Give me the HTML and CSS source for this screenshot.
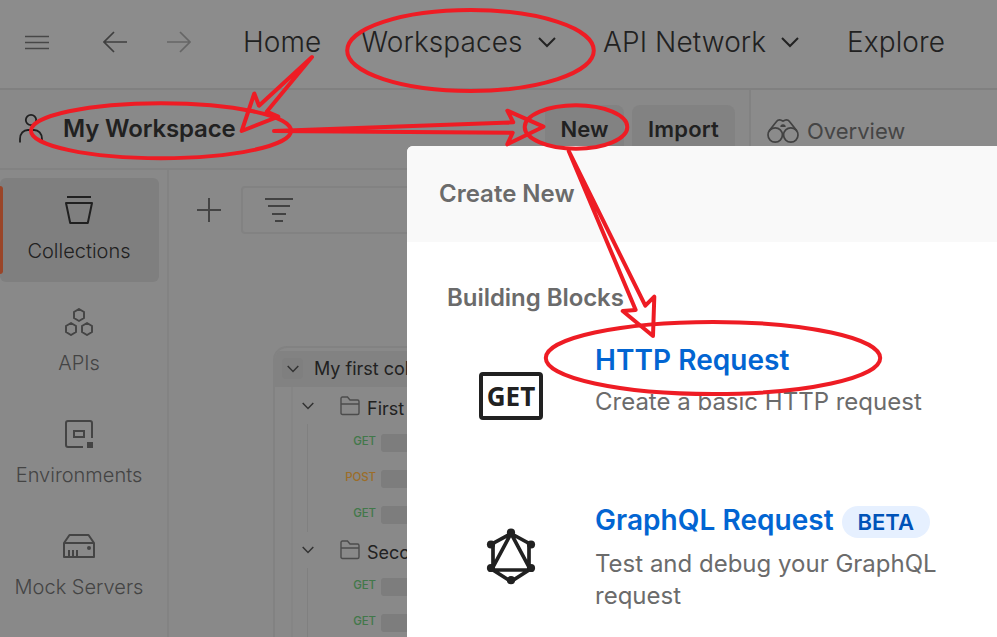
FILE: index.html
```html
<!DOCTYPE html>
<html lang="en">
<head>
<meta charset="utf-8">
<title>My Workspace</title>
<link rel="stylesheet" href="styles.css">
</head>
<body>
<div class="app">
  <header class="topnav">
    <div class="nav-controls">
      <svg class="icon-24" viewBox="0 0 24 24"><path d="M0 6.500h24M0 12.500h24M0 18.500h24" stroke="#474747" stroke-width="1.300"/></svg>
      <svg class="icon-24 back" viewBox="0 0 24 24"><path d="M24 12H1.500M11 2L1 12l10 10" stroke="#3f3f3f" stroke-width="1.700"/></svg>
      <svg class="icon-24 forward" viewBox="0 0 24 24"><path d="M0 12h22.500M13 2l10 10-10 10" stroke="#666" stroke-width="1.700"/></svg>
    </div>
    <a class="nav-link">Home</a>
    <a class="nav-link">Workspaces <svg class="chev" viewBox="0 0 18 12"><path d="M1 2l8 8 8-8" stroke="#222" stroke-width="2"/></svg></a>
    <a class="nav-link">API Network <svg class="chev" viewBox="0 0 18 12"><path d="M1 2l8 8 8-8" stroke="#222" stroke-width="2"/></svg></a>
    <a class="nav-link">Explore</a>
  </header>

  <div class="subbar">
    <div class="workspace">
      <svg class="user" viewBox="0 0 26 30"><circle cx="13" cy="7" r="5.200" stroke="#202020" stroke-width="1.800"/><path d="M2 29.500V26c0-5.500 3.500-9 8-9h6c4.500 0 8 3.500 8 9v3.500" stroke="#202020" stroke-width="1.800"/></svg>
      <span class="workspace-name">My Workspace</span>
      <button class="btn btn-new">New</button>
      <button class="btn btn-import">Import</button>
    </div>
    <div class="tab">
      <svg class="binoculars" viewBox="0 0 32 26"><g stroke="#424242" stroke-width="1.700"><circle cx="8.200" cy="17" r="7.200"/><circle cx="23.800" cy="17" r="7.200"/><path d="M2 13L9.500 3.500Q11 1.500 13.500 2l2.500 1 2.500-1q2.500-.5 4 1.500L30 13"/></g><path d="M13.300 9a2.700 2.700 0 0 1 5.400 0z" fill="#424242"/></svg>
      <span>Overview</span>
    </div>
  </div>

  <div class="body">
    <nav class="sidebar">
      <div class="side-item active">
        <svg class="side-icon" viewBox="0 0 32 28"><path d="M4 1h24M3 7h26l-4.200 20H7.200z" stroke="#202020" stroke-width="2" stroke-linejoin="round"/></svg>
        <span>Collections</span>
      </div>
      <div class="side-item">
        <svg class="side-icon" viewBox="0 0 32 28"><path d="M16 1l5 3v6l-5 3-5-3V4zM8 15l5 3v6l-5 3-5-3v-6zM24 15l5 3v6l-5 3-5-3v-6z" stroke="#444" stroke-width="1.900"/></svg>
        <span>APIs</span>
      </div>
      <div class="side-item">
        <svg class="side-icon" viewBox="0 0 32 28"><path d="M20 27H5q-2 0-2-2V3q0-2 2-2h22q2 0 2 2v15M11 11h10v6H11z" stroke="#444" stroke-width="2"/><path d="M24 22h6v6h-6z" fill="#444"/></svg>
        <span>Environments</span>
      </div>
      <div class="side-item">
        <svg class="side-icon" viewBox="0 0 32 28"><path d="M1 11h30v14H1zM1 11L6.500 3h19L31 11M6 18v7M10 18v7M14 18v7" stroke="#444" stroke-width="2" stroke-linejoin="round"/><circle cx="26" cy="16" r="2" fill="#444"/></svg>
        <span>Mock Servers</span>
      </div>
    </nav>

    <main class="panel">
      <div class="toolbar">
        <svg class="icon-24" viewBox="0 0 24 24"><path d="M0 12h24M12 0v24" stroke="#444" stroke-width="2"/></svg>
        <div class="filter"><svg viewBox="0 0 28 24"><path d="M0 1h28M3 8h22M7 16h14M10 23h8" stroke="#424242" stroke-width="2"/></svg></div>
      </div>
      <section class="card">
        <div class="card-head"><span class="toggle"><svg class="chev-sm" viewBox="0 0 12 8"><path d="M.7 1L6 6.500 11.300 1" stroke="#333" stroke-width="1.500"/></svg></span>My first collection</div>
        <div class="tree">
          <div class="folder-row first"><svg class="chev-sm" viewBox="0 0 12 8"><path d="M.7 1L6 6.500 11.300 1" stroke="#333" stroke-width="1.500"/></svg><svg class="folder" viewBox="0 0 20 20"><path d="M1 17V2.500Q1 1 2.500 1h5l2.500 3h7.500Q19 4 19 5.500V17q0 1.500-1.500 1.500h-15Q1 18.500 1 17zM1 8h18" stroke="#4c4c4c" stroke-width="1.400"/></svg><span>First folder</span></div>
          <div class="requests">
            <div class="req"><b class="get">GET</b><i></i></div>
            <div class="req"><b class="post">POST</b><i></i></div>
            <div class="req"><b class="get">GET</b><i></i></div>
          </div>
          <div class="folder-row"><svg class="chev-sm" viewBox="0 0 12 8"><path d="M.7 1L6 6.500 11.300 1" stroke="#333" stroke-width="1.500"/></svg><svg class="folder" viewBox="0 0 20 20"><path d="M1 17V2.500Q1 1 2.500 1h5l2.500 3h7.500Q19 4 19 5.500V17q0 1.500-1.500 1.500h-15Q1 18.500 1 17zM1 8h18" stroke="#4c4c4c" stroke-width="1.400"/></svg><span>Second folder</span></div>
          <div class="requests">
            <div class="req"><b class="get">GET</b><i></i></div>
            <div class="req"><b class="get">GET</b><i></i></div>
          </div>
        </div>
      </section>
    </main>
  </div>
</div>

<div class="modal">
  <div class="modal-head">Create New</div>
  <div class="modal-body">
    <h2>Building Blocks</h2>
    <div class="block">
      <div class="get-icon">GET</div>
      <div class="block-text">
        <div class="block-title">HTTP Request</div>
        <p>Create a basic HTTP request</p>
      </div>
    </div>
    <div class="block graphql">
      <svg class="gql-icon" viewBox="0 0 64 64"><path d="M32 9.500L52 20.500 50 22v24L32 57.500 14 46V22l-2-1.500zM32 9.500L12.500 46h39z" stroke="#212121" stroke-width="3.700"/><g fill="#212121"><circle cx="32" cy="8.500" r="4.100"/><circle cx="12" cy="20.500" r="4.100"/><circle cx="52" cy="20.500" r="4.100"/><circle cx="12" cy="44" r="4.100"/><circle cx="52" cy="44" r="4.100"/><circle cx="32" cy="56.200" r="4.100"/></g></svg>
      <div class="block-text">
        <div class="block-title">GraphQL Request<span class="badge">BETA</span></div>
        <p>Test and debug your GraphQL request</p>
      </div>
    </div>
  </div>
</div>

<svg class="annotations" viewBox="0 0 997 637">
  <ellipse cx="470.500" cy="50.500" rx="123.300" ry="40.500"/>
  <ellipse cx="161" cy="130.700" rx="130" ry="27.500"/>
  <ellipse cx="576" cy="127" rx="51.300" ry="21.700"/>
  <ellipse cx="713" cy="358" rx="167.200" ry="36"/>
  <path d="M312 57L259 105.700 254.300 93.500 241.700 131 278.300 116.700 266.700 111.700z"/>
  <path d="M274 131L513.300 122.300 507.300 110.700 543.500 126.700 507.300 144.300 512.700 132.700z"/>
  <path d="M568.700 151L645.300 305.700 654.300 296.700 653 336 622.700 311 635.700 310z"/>
</svg>
</body>
</html>
```
FILE: styles.css
```css
* { box-sizing: border-box; }
body {
  margin: 0;
  width: 997px;
  height: 637px;
  overflow: hidden;
  position: relative;
  font-family: Inter, "Liberation Sans", sans-serif;
  background: #898989;
  color: #212121;
}
svg { fill: none; flex: none; display: block; }
.app { height: 637px; display: flex; flex-direction: column; overflow: hidden; }

/* Top navigation */
.topnav {
  flex: none;
  height: 90px;
  padding-bottom: 4px;
  border-bottom: 2px solid #808080;
  background: #8c8c8c;
  display: grid;
  grid-template-columns: 243px 118px 242px 244px 1fr;
  align-items: center;
}
.nav-controls { display: flex; padding-left: 25px; }
.icon-24 { width: 24px; height: 24px; }
.back { margin-left: 54px; }
.forward { margin-left: 40px; }
.nav-link { display: flex; align-items: center; font-size: 28px; font-weight: 350; letter-spacing: .1px; white-space: nowrap; }
.chev { width: 18px; height: 12px; margin-left: 15px; }

/* Workspace bar */
.subbar { flex: none; height: 80px; display: flex; }
.workspace {
  width: 751px;
  display: flex;
  align-items: flex-start;
  padding: 15px 14px 0 18px;
  border-right: 2px solid #828282;
  border-bottom: 2px solid #828282;
}
.user { width: 26px; height: 30px; margin-top: 8px; }
.workspace-name { width: 482px; margin-left: 19px; font-size: 24px; line-height: 48px; font-weight: 600; letter-spacing: -.15px; }
.btn {
  height: 48px;
  padding: 0;
  border: 0;
  border-radius: 8px;
  background: #828282;
  color: #212121;
  font: 600 22px/48px Inter, sans-serif;
}
.btn-new { width: 79px; }
.btn-import { width: 103px; margin-left: 8px; letter-spacing: .2px; }
.tab {
  flex: 1;
  display: flex;
  align-items: flex-start;
  padding: 28px 0 0 16px;
  background: #8b8b8b;
  color: #454545;
  font-size: 22px;
  line-height: 26px;
}
.binoculars { width: 32px; height: 26px; margin-right: 8px; }

/* Sidebar */
.body { flex: 1; display: flex; min-height: 0; }
.sidebar {
  flex: none;
  width: 169px;
  padding: 8px 8px 0 0;
  border-right: 2px solid #838383;
  display: flex;
  flex-direction: column;
  gap: 8px;
}
.side-item {
  flex: none;
  height: 104px;
  padding: 18px 1px 0 0;
  display: flex;
  flex-direction: column;
  align-items: center;
  gap: 15px;
  font-size: 20px;
  font-weight: 350;
  line-height: 24px;
  color: #444;
}
.side-icon { width: 32px; height: 28px; }
.side-item span { white-space: nowrap; }
.side-item.active { background: #7f7f7f; border-radius: 6px; color: #212121; position: relative; }
.side-item.active::before {
  content: "";
  position: absolute;
  left: 0;
  top: 8px;
  width: 3px;
  height: 88px;
  border-radius: 0 3px 3px 0;
  background: #9a4528;
}

/* Collections panel */
.panel { flex: 1; min-width: 0; padding-top: 16px; }
.toolbar { display: flex; align-items: center; padding-left: 28px; gap: 20px; }
.filter { flex: 1; height: 48px; border: 2px solid #828282; border-radius: 4px; padding: 10px 22px; }
.filter svg { width: 28px; height: 24px; }
.card {
  margin: 112px 0 0 104px;
  width: 300px;
  height: 310px;
  padding-top: 3px;
  border: 2px solid #828282;
  border-radius: 14px 14px 0 0;
  overflow: hidden;
  font-size: 18px;
}
.card-head { height: 36px; display: flex; align-items: center; padding: 0 0 2px 7px; background: #828282; }
.toggle { width: 21px; height: 21px; margin: 1px 11px 0 0; border-radius: 4px; background: #7f7f7f; display: grid; place-items: center; }
.chev-sm { width: 12px; height: 8px; }
.tree { margin-left: 16px; border-left: 2px solid #858585; }
.folder-row { height: 36px; display: flex; align-items: center; padding-left: 9px; }
.folder-row.first { height: 37px; }
.folder { width: 20px; height: 20px; margin: 0 7px 0 26px; }
.folder-row span { padding-top: 5px; }
.requests { margin-left: 14px; border-left: 1px solid #808080; }
.req { height: 36px; display: flex; align-items: center; }
.req b { width: 68px; padding-bottom: 2px; text-align: right; font-size: 11.5px; line-height: 14px; font-weight: 450; letter-spacing: -.1px; }
.req i { width: 120px; height: 18px; margin: 2px 0 0 5px; border-radius: 3px; background: #7d7d7d; }
.get { color: #42784a; }
.post { color: #9c6d28; }

/* Create New dialog */
.modal {
  position: absolute;
  left: 407px;
  top: 146px;
  width: 620px;
  height: 520px;
  border-radius: 6px;
  overflow: hidden;
  background: #fff;
  color: #6b6b6b;
}
.modal-head { height: 96px; padding-left: 32px; background: #f9f9f9; font-size: 24px; line-height: 96px; font-weight: 600; }
.modal-body { padding: 41px 0 0 40px; }
.modal-body h2 { margin: 0; font-size: 24px; line-height: 30px; font-weight: 600; letter-spacing: -.05px; }
.block { display: flex; margin-top: 31px; padding-left: 32px; }
.block-text { margin-left: 52px; }
.block-title { display: flex; align-items: center; height: 32px; font-size: 28px; font-weight: 600; letter-spacing: .05px; color: #0265d2; }
.block p { margin: 10px 0 0; width: 350px; font-size: 24px; line-height: 32px; color: #6b6b6b; }
.get-icon {
  width: 64px;
  height: 48px;
  margin-top: 28px;
  border: 4px solid #212121;
  border-radius: 4px;
  color: #212121;
  font: 700 26px/41px "Open Sans", sans-serif;
  display: flex;
  justify-content: center;
}
.graphql { margin-top: 84px; }
.gql-icon { width: 64px; height: 64px; margin-top: 20px; }
.graphql .block-title { height: 31px; }
.graphql p { margin-top: 13px; }
.badge {
  width: 88px;
  height: 32px;
  margin: 4px 0 0 8px;
  border-radius: 16px;
  background: #e6f0ff;
  color: #0053b8;
  font-size: 22px;
  line-height: 32px;
  text-align: center;
}

/* Hand-drawn guidance marks over the page */
.annotations { position: absolute; left: 0; top: 0; width: 997px; height: 637px; pointer-events: none; }
.annotations * { stroke: #ee1c24; stroke-width: 4; stroke-linejoin: round; }
```
